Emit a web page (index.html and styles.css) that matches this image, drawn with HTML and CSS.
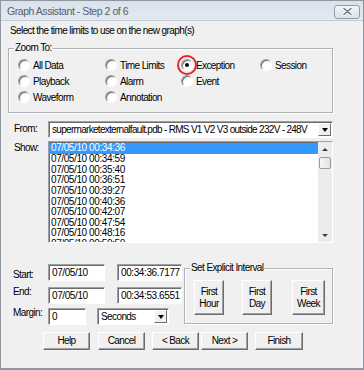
FILE: index.html
```html
<!DOCTYPE html>
<html>
<head>
    <title>Graph Assistant - Step 2 of 6</title>
    <link rel="stylesheet" href="styles.css">
</head>
<body>

<div class="window">
  <div class="titlebar">
    <span class="title">Graph Assistant - Step 2 of 6</span>
    <span class="close">
      <svg width="11" height="9" viewBox="0 0 11 9">
        <path d="M2 1.5 L9 7.5 M9 1.5 L2 7.5" stroke="#fff" stroke-width="3" stroke-linecap="round"/>
        <path d="M2 1.5 L9 7.5 M9 1.5 L2 7.5" stroke="#737d89" stroke-width="1.6" stroke-linecap="round"/>
      </svg>
    </span>
  </div>

  <div class="client">
    <p class="intro">Select the time limits to use on the new graph(s)</p>

    <fieldset class="group zoom">
      <legend>Zoom To:</legend>
      <div class="radios">
        <label class="opt"><span class="radio"></span>All Data</label>
        <label class="opt"><span class="radio"></span>Time Limits</label>
        <label class="opt"><span class="radio on"></span>Exception<span class="mark"></span></label>
        <label class="opt"><span class="radio"></span>Session</label>
        <label class="opt"><span class="radio"></span>Playback</label>
        <label class="opt"><span class="radio"></span>Alarm</label>
        <label class="opt"><span class="radio"></span>Event</label>
        <span></span>
        <label class="opt"><span class="radio"></span>Waveform</label>
        <label class="opt"><span class="radio"></span>Annotation</label>
      </div>
    </fieldset>

    <div class="field from">
      <span class="lbl">From:</span>
      <div class="sunken combo">
        <span class="val source">supermarketexternalfault.pdb - RMS V1 V2 V3 outside 232V - 248V</span>
        <span class="drop"></span>
      </div>
    </div>

    <div class="field show">
      <span class="lbl">Show:</span>
      <div class="sunken listbox">
        <ul class="items">
          <li class="sel">07/05/10 00:34:36</li>
          <li>07/05/10 00:34:59</li>
          <li>07/05/10 00:35:40</li>
          <li>07/05/10 00:36:51</li>
          <li>07/05/10 00:39:27</li>
          <li>07/05/10 00:40:36</li>
          <li>07/05/10 00:42:07</li>
          <li>07/05/10 00:47:54</li>
          <li>07/05/10 00:48:16</li>
          <li>07/05/10 00:50:50</li>
        </ul>
        <div class="vscroll">
          <span class="arrow up"></span>
          <span class="thumb"></span>
          <span class="arrow down"></span>
        </div>
      </div>
    </div>

    <div class="lower">
      <div class="limits">
        <div class="row start">
          <span class="lbl">Start:</span>
          <span class="sunken box date">07/05/10</span>
          <span class="sunken box time">00:34:36.7177</span>
        </div>
        <div class="row end">
          <span class="lbl">End:</span>
          <span class="sunken box date">07/05/10</span>
          <span class="sunken box time">00:34:53.6551</span>
        </div>
        <div class="row margin">
          <span class="lbl">Margin:</span>
          <span class="sunken box num">0</span>
          <span class="sunken combo unit"><span class="val">Seconds</span><span class="drop"></span></span>
        </div>
      </div>

      <fieldset class="group interval">
        <legend>Set Explicit Interval</legend>
        <div class="quick">
          <button class="btn tall">First<br>Hour</button>
          <button class="btn tall day">First<br>Day</button>
          <button class="btn tall week">First<br>Week</button>
        </div>
      </fieldset>
    </div>

    <div class="actions">
      <button class="btn">Help</button>
      <button class="btn cancel">Cancel</button>
      <button class="btn back">&lt; Back</button>
      <button class="btn next">Next &gt;</button>
      <button class="btn finish">Finish</button>
    </div>
  </div>
</div>

</body>
</html>
```

FILE: styles.css
```css
* {
    box-sizing: border-box;
}
body {
    margin: 0;
    font-family: "Liberation Sans", Arial, sans-serif;
    font-size: 10px;
    letter-spacing: -0.6px;
    color: #000;
}
.window {
    width: 364px;
    height: 370px;
    border: 1px solid #8f969e;
    border-bottom-width: 2px;
    background: #f0f0f0;
    display: flex;
    flex-direction: column;
}
.titlebar {
    height: 20px;
    display: flex;
    align-items: center;
    padding-left: 6px;
    background: linear-gradient(#d9e2ec, #e3e9f0);
    border-bottom: 1px solid #c3ccd6;
}
.title {
    flex: 1;
    font-size: 10.5px;
    letter-spacing: -0.45px;
    color: #56606b;
    padding-top: 1px;
}
.close {
    width: 26px;
    height: 14px;
    margin-right: 3px;
    margin-top: 2px;
    border: 1px solid #8f9bab;
    border-radius: 3px;
    background: linear-gradient(#f4f6f9, #d9e0e8);
    display: flex;
    align-items: center;
    justify-content: center;
}
.client {
    flex: 1;
    padding: 4px 0 0 7px;
}
.intro {
    margin: 0 0 5px 2px;
    line-height: 12px;
}

/* group boxes */
.group {
    margin: 0;
    border: 1px solid #aeb2b6;
    box-shadow: inset 1px 1px #fff, 1px 1px #fff;
    min-width: 0;
}
.group legend {
    padding: 0 1px;
    margin-left: -4px;
    line-height: 12px;
    background: #f0f0f0;
}
.zoom {
    width: 325px;
    padding: 3px 0 7px 9px;
}
.radios {
    display: grid;
    grid-template-columns: 87px 76px 79px auto;
    grid-auto-rows: 16px;
}
.opt {
    display: flex;
    align-items: center;
    gap: 3px;
    position: relative;
}
.radio {
    width: 12px;
    height: 12px;
    border-radius: 50%;
    border: 1px solid;
    border-color: #a0a0a0 #fff #fff #a0a0a0;
    background: #fff;
    box-shadow: inset 1px 1px #6d6d6d;
    display: flex;
    align-items: center;
    justify-content: center;
}
.radio.on:after {
    content: "";
    width: 4px;
    height: 4px;
    border-radius: 50%;
    background: #000;
}
.mark {
    position: absolute;
    left: -4px;
    top: -2px;
    width: 20px;
    height: 20px;
    border: 2px solid #e0262b;
    border-radius: 50%;
}

/* from / show */
.field {
    display: grid;
    grid-template-columns: 40px 285px;
    margin-top: 8px;
}
.field .lbl {
    padding: 2px 0 0 6px;
    line-height: 12px;
}
.show {
    margin-top: 3px;
}
.show .lbl {
    padding-top: 1px;
}
.sunken {
    background: #fff;
    border: 1px solid;
    border-color: #a0a0a0 #fff #fff #a0a0a0;
    box-shadow: inset 1px 1px #6d6d6d;
}
.combo {
    height: 17px;
    display: flex;
    align-items: center;
    padding: 0 1px 0 3px;
}
.combo .val {
    flex: 1;
    white-space: nowrap;
    overflow: hidden;
}
.combo .source {
    letter-spacing: -0.7px;
}
.drop {
    width: 13px;
    height: 13px;
    border: 1px solid;
    border-color: #fff #6d6d6d #6d6d6d #fff;
    background: #f0f0f0;
    display: flex;
    align-items: center;
    justify-content: center;
}
.drop:after {
    content: "";
    border-left: 3.5px solid transparent;
    border-right: 3.5px solid transparent;
    border-top: 4px solid #000;
}
.listbox {
    height: 102px;
    display: flex;
    padding-top: 1px;
}
.items {
    flex: 1;
    list-style: none;
    margin: 0;
    padding: 0;
    overflow: hidden;
}
.items li {
    height: 10.65px;
    line-height: 10.65px;
    padding-left: 2px;
    letter-spacing: -0.4px;
    white-space: nowrap;
}
.items li.sel {
    height: 11px;
    background: #3399ff;
    color: #fff;
}
.vscroll {
    width: 14px;
    margin-top: -1px;
    display: flex;
    flex-direction: column;
    align-items: center;
    background: #ececec;
    padding: 6px 0 5px;
}
.arrow {
    border-left: 3px solid transparent;
    border-right: 3px solid transparent;
}
.arrow.up {
    border-bottom: 3px solid #3c3c3c;
}
.arrow.down {
    margin-top: auto;
    border-top: 3px solid #3c3c3c;
}
.thumb {
    width: 12px;
    height: 12px;
    margin-top: 6px;
    border: 1px solid #9b9b9b;
    border-radius: 2px;
    background: linear-gradient(90deg, #f7f7f7, #e2e2e2);
}

/* start / end / margin */
.lower {
    display: flex;
    margin-top: 19px;
}
.limits {
    width: 176px;
    padding-top: 2px;
    display: flex;
    flex-direction: column;
}
.row {
    display: flex;
    height: 17px;
}
.row .lbl {
    width: 40px;
    padding-left: 5px;
    line-height: 12px;
    margin-top: -1px;
}
.row.start .lbl {
    margin-top: 5px;
}
.row.end {
    margin-top: 6px;
}
.row.margin {
    margin-top: 4px;
}
.box {
    height: 17px;
    display: flex;
    align-items: center;
    padding-left: 3px;
    letter-spacing: -0.4px;
}
.date {
    width: 57px;
}
.time {
    width: 65px;
    margin-left: 12px;
}
.num {
    width: 38px;
}
.unit {
    width: 72px;
    margin-left: 11px;
}
.interval {
    width: 149px;
    height: 62px;
    padding: 6px 0 0 9px;
}
.quick {
    display: flex;
}

/* buttons */
.btn {
    font: inherit;
    letter-spacing: inherit;
    color: #000;
    width: 47px;
    height: 18px;
    padding: 0;
    border: 1px solid;
    border-color: #fff #6d6d6d #6d6d6d #fff;
    box-shadow: inset -1px -1px #a0a0a0;
    background: #f0f0f0;
    line-height: 12px;
}
.btn.tall {
    width: 30px;
    height: 35px;
}
.btn.day {
    margin-left: 18px;
}
.btn.week {
    width: 33px;
    margin-left: 20px;
}
.actions {
    display: flex;
    margin-top: 7px;
    padding-left: 35px;
}
.cancel {
    margin-left: 8px;
}
.back {
    margin-left: 7px;
}
.next {
    margin-left: 2px;
}
.finish {
    margin-left: 7px;
    width: 48px;
}
```
